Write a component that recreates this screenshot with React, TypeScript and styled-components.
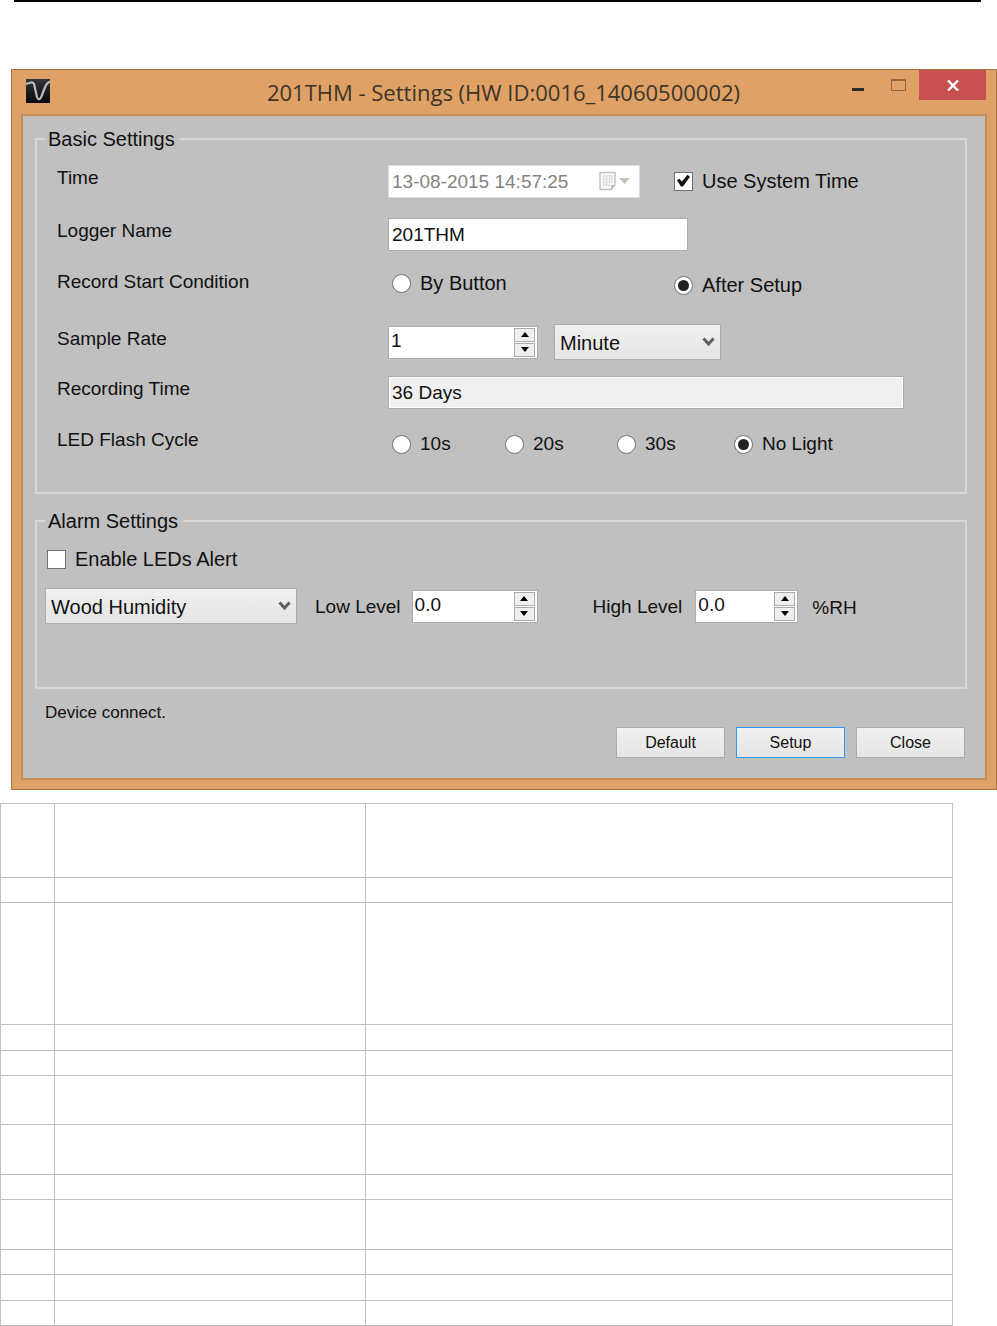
import React, { useState } from "react";
import styled, { createGlobalStyle, css } from "styled-components";

const GlobalStyle = createGlobalStyle`
  *, *::before, *::after { box-sizing: border-box; }
  body {
    margin: 0;
    background: #fff;
    color: #111;
    font-family: "Liberation Sans", Arial, sans-serif;
    font-size: 19px;
    line-height: 24px;
  }
  input, select, button { font: inherit; color: inherit; margin: 0; }
`;

const TopRule = styled.hr`
  height: 2px;
  margin: 0 16px 0 14px;
  border: 0;
  background: #000;
`;

const Window = styled.section`
  margin: 67px 0 13px 11px;
  padding: 0 9px 9px;
  background: #dfa165;
  border: 1px solid #a9763f;
`;

const TitleBar = styled.header`
  display: grid;
  grid-template-columns: 1fr auto 1fr;
  height: 44px;
  padding-right: 1px;
`;

const AppIcon = styled.svg`
  margin: 9px 0 0 5px;
`;

const Title = styled.h1`
  margin: 0;
  font-family: "Open Sans", "Noto Sans", sans-serif;
  font-size: 22px;
  font-weight: 400;
  line-height: 44px;
  color: #3d3529;
  white-space: nowrap;
`;

const Captions = styled.div`
  display: flex;
  justify-content: flex-end;
  align-items: flex-start;
`;

const CaptionButton = styled.button<{ $close?: boolean }>`
  display: flex;
  align-items: center;
  justify-content: center;
  width: ${(p) => (p.$close ? 67 : 41)}px;
  height: 30px;
  padding: 0;
  border: 0;
  background: ${(p) => (p.$close ? "#c75050" : "transparent")};
`;

const Client = styled.form`
  padding: 11px 18px 20px 12px;
  background: #c0c0c0;
  border: 2px solid #c58d58;
`;

const Group = styled.fieldset`
  min-width: 0;
  margin: 0;
  padding: 3px 8px 16px;
  border: 2px solid #d6d6d6;

  & + & {
    margin-top: 15px;
    padding: 14px 8px 63px;
  }
`;

const Legend = styled.legend`
  padding: 0 5px 0 3px;
  font-size: 20px;
  line-height: 24px;
`;

const SettingsGrid = styled.div`
  display: grid;
  grid-template-rows: 54px 52px 50px 64px 36px 66px;
  padding-left: 12px;
`;

const Row = styled.div`
  display: grid;
  grid-template-columns: 331px 1fr;
  align-items: center;
`;

const rowName = css`
  padding-bottom: 6px;
`;
const RowLabel = styled.label`
  ${rowName}
`;
const RowName = styled.span`
  ${rowName}
`;

const TwoColumns = styled.div`
  display: grid;
  grid-template-columns: 286px 1fr;
  align-items: center;
`;

const LedChoices = styled.div`
  display: grid;
  grid-template-columns: 113px 112px 117px 1fr;
  padding: 2px 0 0 4px;
`;

const StartChoice = styled.div`
  padding-left: 4px;
`;

const Controls = styled.div`
  display: flex;
  align-items: center;
  gap: 16px;
`;

const Choice = styled.label<{ $small?: boolean }>`
  display: inline-flex;
  align-items: center;
  gap: 9px;
  font-size: ${(p) => (p.$small ? 19 : 20)}px;
  white-space: nowrap;
`;

const CheckBox = styled.input.attrs({ type: "checkbox" })`
  appearance: none;
  width: 19px;
  height: 19px;
  background: #fff;
  border: 1px solid #707070;

  &:checked::before {
    content: "";
    display: block;
    width: 13px;
    height: 12px;
    margin: 2px;
    background: #111;
    clip-path: polygon(0 48%, 18% 36%, 38% 58%, 80% 2%, 100% 18%, 46% 100%, 30% 100%);
  }
`;

const Radio = styled.input.attrs({ type: "radio" })`
  appearance: none;
  width: 19px;
  height: 19px;
  border: 1px solid #707070;
  border-radius: 50%;
  background: #fff;

  &:checked::before {
    content: "";
    display: block;
    width: 11px;
    height: 11px;
    margin: 3px;
    border-radius: 50%;
    background: #222;
  }
`;

const TextField = styled.input`
  width: 300px;
  height: 33px;
  padding: 2px 3px 0;
  border: 1px solid #abadb3;
  background: #fff;
  outline: 0;
`;

const ReadOnlyField = styled(TextField)`
  width: auto;
  margin-right: 53px;
  background: #f0f0f0;
  box-shadow: inset 0 0 0 1px #fff;
`;

const DateBox = styled.div`
  display: flex;
  align-items: center;
  width: 252px;
  height: 33px;
  padding: 0 9px 0 3px;
  background: #fff;
  border: 1px solid #dcdcdc;
`;

const DateInput = styled.input`
  flex: 1;
  min-width: 0;
  padding: 2px 0 0;
  border: 0;
  background: transparent;
  color: #838383;
`;

const PickerButton = styled.button`
  display: flex;
  padding: 0;
  border: 0;
  background: transparent;
`;

const SpinBox = styled.div<{ $width: number }>`
  display: flex;
  width: ${(p) => p.$width}px;
  height: 33px;
  padding: 1px 2px 1px 2px;
  background: #fff;
  border: 1px solid #abadb3;
`;

const SpinInput = styled.input`
  flex: 1;
  min-width: 0;
  padding: 0 0 2px;
  border: 0;
  background: transparent;
  outline: 0;
`;

const SpinButtons = styled.div`
  display: flex;
  flex-direction: column;
  gap: 1px;
  width: 21px;
`;

const SpinButton = styled.button`
  display: flex;
  flex: 1;
  align-items: center;
  justify-content: center;
  padding: 0;
  background: #efefef;
  border: 1px solid #acacac;
`;

const SelectBox = styled.div<{ $width: number }>`
  display: grid;
  align-items: center;
  width: ${(p) => p.$width}px;
  height: 36px;

  & > * { grid-area: 1 / 1; }
  & > svg {
    justify-self: end;
    margin-right: 6px;
    pointer-events: none;
  }
`;

const Select = styled.select`
  appearance: none;
  width: 100%;
  height: 100%;
  padding: 2px 24px 0 5px;
  border: 1px solid #acacac;
  border-radius: 0;
  background: linear-gradient(#f0f0f0, #e5e5e5);
  font-size: 20px;
`;

const AlarmRow = styled.div`
  display: flex;
  align-items: center;
  margin-top: 17px;
`;

const LevelLabel = styled.label<{ $before: number; $after: number }>`
  margin: 0 ${(p) => p.$after}px 0 ${(p) => p.$before}px;
  padding-top: 2px;
  white-space: nowrap;
`;

const Unit = styled.span`
  margin-left: 14px;
  padding-top: 3px;
`;

const CheckRow = styled.div`
  display: flex;
  padding-left: 2px;
`;

const Status = styled.p`
  margin: 13px 0 3px 10px;
  font-size: 17px;
  line-height: 22px;
`;

const Actions = styled.div`
  display: flex;
  justify-content: flex-end;
  gap: 11px;
  padding-right: 2px;
`;

const ActionButton = styled.button<{ $primary?: boolean }>`
  width: 109px;
  height: 31px;
  padding: 0;
  font-size: 16px;
  line-height: 20px;
  background: linear-gradient(#f0f0f0, #e5e5e5);
  border: 1px solid ${(p) => (p.$primary ? "#3399ff" : "#acacac")};
`;

const NotesTable = styled.table`
  width: calc(100% - 44px);
  table-layout: fixed;
  border-collapse: separate;
  border-spacing: 0;
  border: solid #c0c0c0;
  border-width: 1px 0 0 1px;
`;

const NotesRow = styled.tr<{ $height: number }>`
  height: ${(p) => p.$height}px;
`;

const NotesCell = styled.td`
  padding: 0;
  border: solid #c0c0c0;
  border-width: 0 1px 1px 0;
`;

const noteRowHeights = [74, 25, 122, 26, 25, 49, 50, 25, 50, 25, 26, 25];

const Chevron = () => (
  <svg width="13" height="10" viewBox="0 0 13 10" aria-hidden="true">
    <path d="M1.500 1.500 L6.500 7 L11.500 1.500" fill="none" stroke="#606060" strokeWidth="3" />
  </svg>
);

function Spinner(props: { id: string; value: number; digits: number; width: number }) {
  const [value, setValue] = useState(props.value);
  return (
    <SpinBox $width={props.width}>
      <SpinInput id={props.id} value={value.toFixed(props.digits)} onChange={(e) => setValue(Number(e.target.value) || 0)} />
      <SpinButtons>
        <SpinButton type="button" aria-label="Increase" onClick={() => setValue(value + 1)}>
          <svg width="8" height="5" viewBox="0 0 8 5"><path d="M0 5 L4 0 L8 5Z" fill="#000" /></svg>
        </SpinButton>
        <SpinButton type="button" aria-label="Decrease" onClick={() => setValue(Math.max(0, value - 1))}>
          <svg width="8" height="5" viewBox="0 0 8 5"><path d="M0 0 L4 5 L8 0Z" fill="#000" /></svg>
        </SpinButton>
      </SpinButtons>
    </SpinBox>
  );
}

export default function App() {
  return (
    <>
      <GlobalStyle />
      <TopRule />
      <Window>
        <TitleBar>
          <AppIcon width="24" height="24" viewBox="0 0 24 24" aria-hidden="true">
            <defs>
              <linearGradient id="iconShade" x1="0" y1="0" x2="0" y2="1">
                <stop offset="0" stopColor="#33353b" />
                <stop offset="1" stopColor="#07080c" />
              </linearGradient>
            </defs>
            <rect width="24" height="24" fill="url(#iconShade)" />
            <path d="M0 5 L5 3.500 Q7.500 2.800 8.300 6 L11 18 Q12.500 22.500 15 18.500 L19.500 7 Q21 3.800 24 2.500" fill="none" stroke="#bcbcbc" strokeWidth="2.200" />
          </AppIcon>
          <Title>201THM - Settings (HW ID:0016_14060500002)</Title>
          <Captions>
            <CaptionButton type="button" aria-label="Minimize">
              <svg width="13" height="14" viewBox="0 0 13 14"><rect x="1" y="10" width="12" height="3" fill="#2b2b2b" /></svg>
            </CaptionButton>
            <CaptionButton type="button" aria-label="Maximize">
              <svg width="15" height="12" viewBox="0 0 15 12"><path d="M0.500 0.500H14.500V11.500H0.500Z M0.500 1.500H14.500" fill="none" stroke="#8a6845" /></svg>
            </CaptionButton>
            <CaptionButton type="button" aria-label="Close window" $close>
              <svg width="12" height="11" viewBox="0 0 12 11"><path d="M1 0.500 L11 10.500 M11 0.500 L1 10.500" stroke="#fff" strokeWidth="2.400" /></svg>
            </CaptionButton>
          </Captions>
        </TitleBar>

        <Client onSubmit={(e) => e.preventDefault()}>
          <Group>
            <Legend>Basic Settings</Legend>
            <SettingsGrid>
              <Row>
                <RowLabel htmlFor="time">Time</RowLabel>
                <TwoColumns>
                  <DateBox>
                    <DateInput id="time" defaultValue="13-08-2015 14:57:25" disabled />
                    <PickerButton type="button" aria-label="Open calendar" disabled>
                      <svg width="31" height="20" viewBox="0 0 31 20">
                        <path d="M1 1.500H16V14L12 18.500H1Z" fill="#fafafa" stroke="#c4c0bc" strokeWidth="1.400" />
                        <path d="M3.500 5H13.500M3.500 8H13.500M3.500 11H13.500M3.500 14H11M4.500 4V15M7.500 4V15M10.500 4V15M13 4V12" stroke="#d5dade" fill="none" />
                        <path d="M16 14H12V18.500Z" fill="#bdbab6" />
                        <path d="M20 7H31L25.500 13Z" fill="#c4c4bc" />
                      </svg>
                    </PickerButton>
                  </DateBox>
                  <Choice>
                    <CheckBox defaultChecked />
                    Use System Time
                  </Choice>
                </TwoColumns>
              </Row>
              <Row>
                <RowLabel htmlFor="logger">Logger Name</RowLabel>
                <TextField id="logger" defaultValue="201THM" />
              </Row>
              <Row role="radiogroup" aria-labelledby="start-name">
                <RowName id="start-name">Record Start Condition</RowName>
                <TwoColumns>
                  <StartChoice>
                    <Choice>
                      <Radio name="start" />
                      By Button
                    </Choice>
                  </StartChoice>
                  <Choice>
                    <Radio name="start" defaultChecked />
                    After Setup
                  </Choice>
                </TwoColumns>
              </Row>
              <Row>
                <RowLabel htmlFor="rate">Sample Rate</RowLabel>
                <Controls>
                  <Spinner id="rate" value={1} digits={0} width={150} />
                  <SelectBox $width={167}>
                    <Select aria-label="Sample rate unit" defaultValue="Minute">
                      <option>Second</option>
                      <option>Minute</option>
                      <option>Hour</option>
                    </Select>
                    <Chevron />
                  </SelectBox>
                </Controls>
              </Row>
              <Row>
                <RowLabel htmlFor="duration">Recording Time</RowLabel>
                <ReadOnlyField id="duration" value="36 Days" readOnly />
              </Row>
              <Row role="radiogroup" aria-labelledby="led-name">
                <RowName id="led-name">LED Flash Cycle</RowName>
                <LedChoices>
                  {["10s", "20s", "30s", "No Light"].map((name) => (
                    <Choice key={name} $small>
                      <Radio name="led" defaultChecked={name === "No Light"} />
                      {name}
                    </Choice>
                  ))}
                </LedChoices>
              </Row>
            </SettingsGrid>
          </Group>

          <Group>
            <Legend>Alarm Settings</Legend>
            <CheckRow>
              <Choice>
                <CheckBox />
                Enable LEDs Alert
              </Choice>
            </CheckRow>
            <AlarmRow>
              <SelectBox $width={252}>
                <Select aria-label="Alarm channel" defaultValue="Wood Humidity">
                  <option>Wood Humidity</option>
                  <option>Temperature</option>
                </Select>
                <Chevron />
              </SelectBox>
              <LevelLabel htmlFor="low" $before={18} $after={11}>Low Level</LevelLabel>
              <Spinner id="low" value={0} digits={1} width={126} />
              <LevelLabel htmlFor="high" $before={55} $after={13}>High Level</LevelLabel>
              <Spinner id="high" value={0} digits={1} width={103} />
              <Unit>%RH</Unit>
            </AlarmRow>
          </Group>

          <Status role="status">Device connect.</Status>
          <Actions>
            <ActionButton type="button">Default</ActionButton>
            <ActionButton type="submit" $primary>Setup</ActionButton>
            <ActionButton type="button">Close</ActionButton>
          </Actions>
        </Client>
      </Window>

      <NotesTable>
        <colgroup>
          <col width="54" />
          <col width="311" />
          <col />
        </colgroup>
        <tbody>
          {noteRowHeights.map((height, i) => (
            <NotesRow key={i} $height={height}>
              <NotesCell />
              <NotesCell />
              <NotesCell />
            </NotesRow>
          ))}
        </tbody>
      </NotesTable>
    </>
  );
}
